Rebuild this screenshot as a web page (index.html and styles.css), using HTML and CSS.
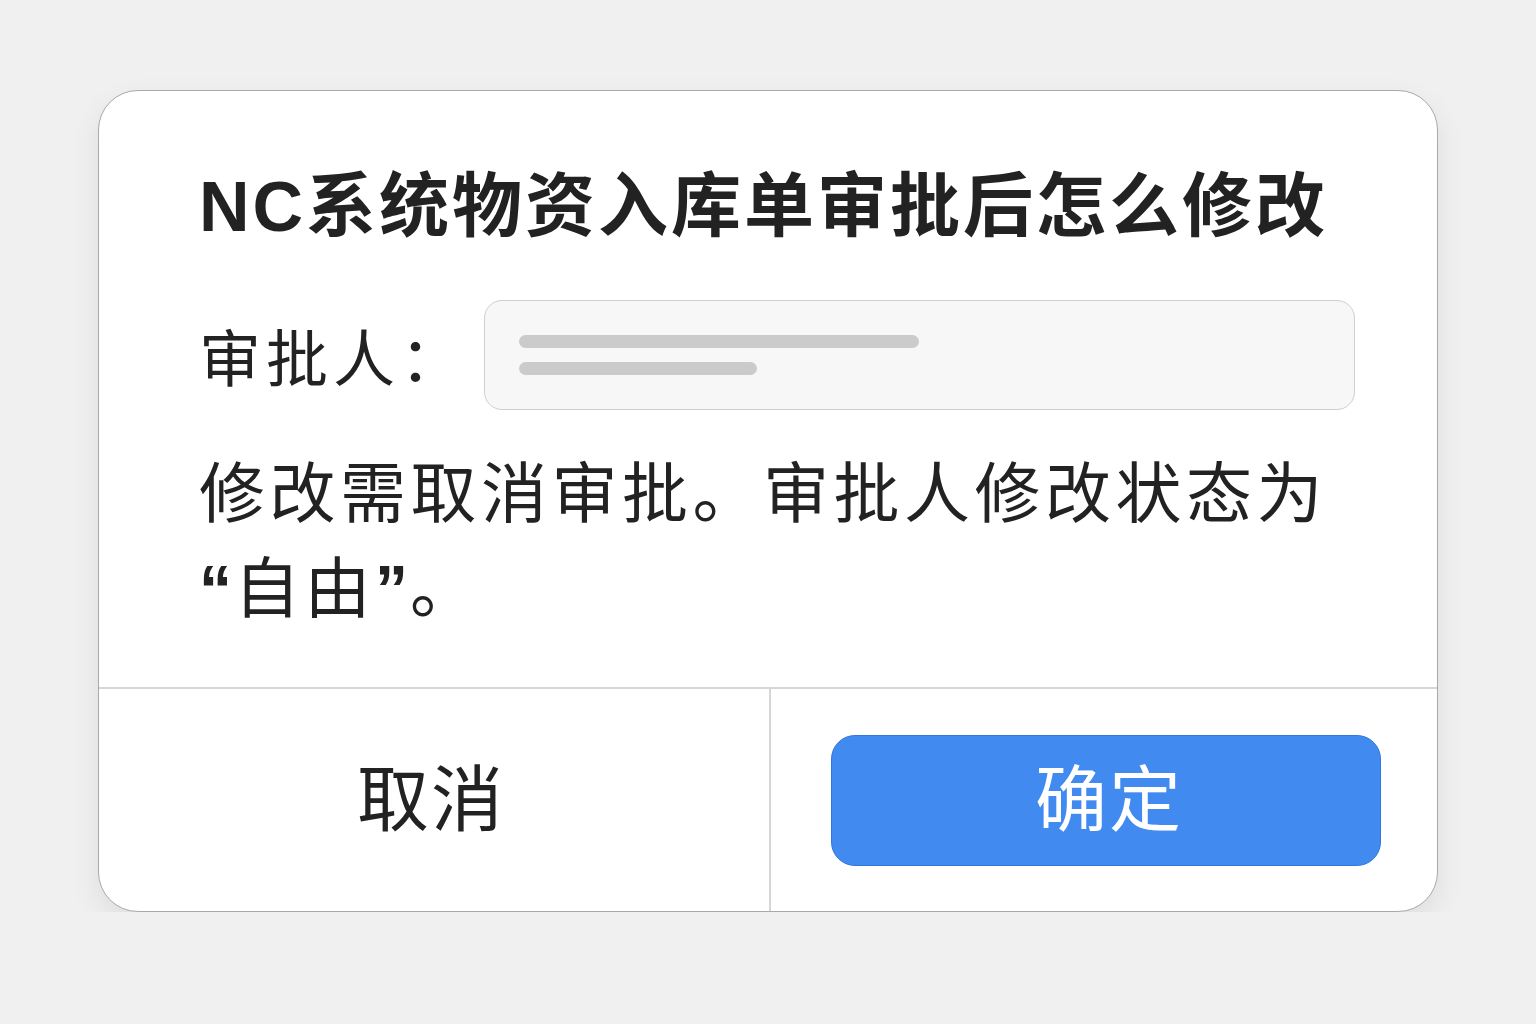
FILE: index.html
```html
<!DOCTYPE html>
<html lang="zh-CN">
<head>
    <meta charset="UTF-8">
    <meta name="viewport" content="width=device-width, initial-scale=1.0">
    <title>审批修改</title>
    <link rel="stylesheet" href="styles.css">
</head>
<body>
    <div class="dialog">
        <div class="content">
            <h1 class="title">NC系统物资入库单审批后怎么修改</h1>
            <div class="field">
                <span class="label">审批人：</span>
                <div class="input">
                    <span class="bar bar-long"></span>
                    <span class="bar bar-short"></span>
                </div>
            </div>
            <p class="message">修改需取消审批。审批人修改状态为<br><span class="quote">“</span>自由<span class="quote">”</span>。</p>
        </div>
        <div class="footer">
            <div class="cell">
                <button class="btn-cancel" type="button">取消</button>
            </div>
            <div class="cell cell-right">
                <button class="btn-ok" type="button">确定</button>
            </div>
        </div>
    </div>
</body>
</html>
```

FILE: styles.css
```css
body {
    margin: 0;
    background: #f0f0f0;
    font-family: "Liberation Sans", "Noto Sans CJK SC", sans-serif;
    color: #222;
}

.dialog {
    width: 1340px;
    height: 822px;
    box-sizing: border-box;
    margin: 90px auto 0;
    background: #fff;
    border: 1.5px solid #a9a9a9;
    border-radius: 40px;
    box-shadow: 0 12px 30px rgba(0, 0, 0, 0.08);
    display: flex;
    flex-direction: column;
    overflow: hidden;
}

.content {
    padding: 74px 60px 0 100px;
    height: 596px;
    box-sizing: border-box;
}

.title {
    margin: 0;
    font-size: 70px;
    line-height: 84px;
    font-weight: 700;
    letter-spacing: 3px;
    white-space: nowrap;
}

.field {
    display: flex;
    align-items: center;
    margin-top: 51px;
    height: 110px;
}

.label {
    width: 285px;
    flex: none;
    font-size: 62px;
    letter-spacing: 5px;
}

.input {
    width: 871px;
    flex: none;
    height: 110px;
    box-sizing: border-box;
    background: #f7f7f7;
    border: 1.5px solid #cfcfcf;
    border-radius: 18px;
    padding: 34px 0 0 34px;
    display: flex;
    flex-direction: column;
    gap: 14px;
}

.bar {
    display: block;
    height: 13px;
    border-radius: 7px;
    background: #cbcbcb;
}

.bar-long { width: 400px; }
.bar-short { width: 238px; }

.message {
    margin: 37px 0 0;
    font-size: 66px;
    line-height: 95px;
    letter-spacing: 4.5px;
}

.quote {
    font-weight: 700;
    letter-spacing: 2px;
}

.footer {
    flex: 1;
    display: grid;
    grid-template-columns: 670px 1fr;
    border-top: 2px solid #d6d6d6;
}

.cell {
    display: flex;
    align-items: center;
    justify-content: center;
}

.cell-right {
    border-left: 2px solid #d6d6d6;
    padding: 0 56px 0 60px;
}

.btn-cancel,
.btn-ok {
    font-family: inherit;
    font-size: 72px;
    line-height: 1;
    letter-spacing: 2px;
    padding: 0;
    border: none;
    cursor: pointer;
}

.btn-cancel {
    background: none;
    color: #222;
    margin: 0 0 0 -6px;
}

.btn-ok {
    width: 100%;
    height: 131px;
    background: #418bf0;
    border: 1.5px solid #2f78e0;
    border-radius: 24px;
    color: #fff;
    padding-left: 6px;
}
```
